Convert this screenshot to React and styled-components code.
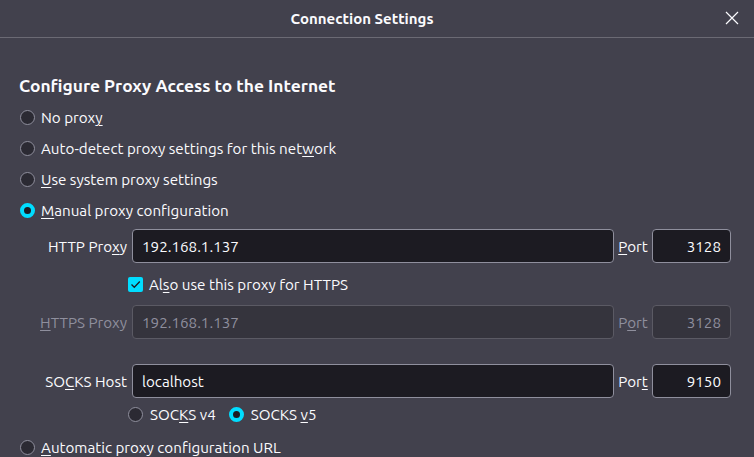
import React from 'react'
import styled, { createGlobalStyle } from 'styled-components'

const GlobalStyle = createGlobalStyle`
  html, body {
    margin: 0;
    padding: 0;
    background: #42414d;
  }
  body {
    font-family: Ubuntu, "Noto Sans", "Liberation Sans", sans-serif;
    color: #fbfbfe;
  }
`

const Dialog = styled.div`
  width: 754px;
  height: 457px;
  overflow: hidden;
  background: #42414d;
`

const Header = styled.div`
  position: relative;
  height: 37px;
  border-bottom: 1px solid #6b6a74;
  display: flex;
  align-items: center;
  justify-content: center;
  padding-right: 30px;
`

const Title = styled.div`
  font-size: 15px;
  font-weight: 700;
`

const CloseBtn = styled.button`
  position: absolute;
  right: 14px;
  top: 10px;
  width: 16px;
  height: 16px;
  padding: 0;
  border: none;
  background: transparent;
  color: #fbfbfe;
  display: flex;
`

const Body = styled.div`
  padding: 38px 19px 0 19px;
`

const Heading = styled.h1`
  margin: 0 0 6px 0;
  font-size: 17.4px;
  line-height: 20px;
  font-weight: 700;
`

const OptionRow = styled.label`
  display: flex;
  align-items: center;
  height: 31px;
  gap: 6px;
  padding-left: 1px;
  font-size: 15.2px;
  margin-top: ${p => p.$mt || 0}px;
`

const Radio = styled.span`
  box-sizing: border-box;
  width: 15px;
  height: 15px;
  border-radius: 50%;
  border: ${p => (p.$checked ? '4px solid #00ddff' : '1px solid #8f8f9d')};
  background: ${p => (p.$checked ? '#1c1b22' : '#2b2a33')};
  flex-shrink: 0;
`

const Key = styled.u`
  text-decoration-thickness: 1px;
  text-underline-offset: 2px;
`

const FieldRow = styled.div`
  display: flex;
  align-items: center;
  height: 34px;
  margin-top: ${p => p.$mt || 0}px;
  font-size: 15.2px;
  color: ${p => (p.$disabled ? '#8f8f9d' : '#fbfbfe')};
`

const FieldLabel = styled.span`
  width: 113px;
  box-sizing: border-box;
  padding-right: 5px;
  text-align: right;
  white-space: nowrap;
`

const Input = styled.div`
  box-sizing: border-box;
  width: ${p => p.$w}px;
  height: 34px;
  border-radius: 4px;
  border: 1px solid ${p => (p.$disabled ? '#5b5a64' : '#8f8f9d')};
  background: ${p => (p.$disabled ? '#35343d' : '#1c1b22')};
  color: ${p => (p.$disabled ? '#8f8f9d' : '#fbfbfe')};
  display: flex;
  align-items: center;
  justify-content: ${p => (p.$right ? 'flex-end' : 'flex-start')};
  padding: 0 9px;
  font-size: 15.2px;
`

const PortLabel = styled.span`
  width: 38px;
  text-align: center;
`

const CheckRow = styled.label`
  display: flex;
  align-items: center;
  gap: 6px;
  height: 42px;
  padding-left: 109px;
  font-size: 15.2px;
`

const Checkbox = styled.span`
  width: 15px;
  height: 15px;
  border-radius: 2px;
  background: #00ddff;
  display: flex;
  align-items: center;
  justify-content: center;
`

const VersionRow = styled.div`
  display: flex;
  align-items: center;
  height: 32px;
  padding-left: 109px;
  gap: 13px;
  font-size: 15.2px;
`

const VersionOption = styled.label`
  display: flex;
  align-items: center;
  gap: 7px;
`

const App = () => {
  return (
    <Dialog>
      <GlobalStyle />
      <Header>
        <Title>Connection Settings</Title>
        <CloseBtn aria-label="Close">
          <svg width="16" height="16" viewBox="0 0 16 16">
            <path d="M2 2 L14 14 M14 2 L2 14" stroke="#fbfbfe" strokeWidth="1.2" fill="none" />
          </svg>
        </CloseBtn>
      </Header>
      <Body>
        <Heading>Configure Proxy Access to the Internet</Heading>
        <OptionRow><Radio /><span>No prox<Key>y</Key></span></OptionRow>
        <OptionRow><Radio /><span>Auto-detect proxy settings for this net<Key>w</Key>ork</span></OptionRow>
        <OptionRow><Radio /><span><Key>U</Key>se system proxy settings</span></OptionRow>
        <OptionRow><Radio $checked /><span><Key>M</Key>anual proxy configuration</span></OptionRow>

        <FieldRow $mt={3}>
          <FieldLabel>HTTP Pro<Key>x</Key>y</FieldLabel>
          <Input $w={482}>192.168.1.137</Input>
          <PortLabel><Key>P</Key>ort</PortLabel>
          <Input $w={79} $right>3128</Input>
        </FieldRow>
        <CheckRow>
          <Checkbox>
            <svg width="13" height="13" viewBox="0 0 13 13">
              <path d="M2.5 6.5 L5.3 9.3 L10.8 3.5" stroke="#1c1b22" strokeWidth="1.3" fill="none" />
            </svg>
          </Checkbox>
          <span>Al<Key>s</Key>o use this proxy for HTTPS</span>
        </CheckRow>
        <FieldRow $disabled>
          <FieldLabel><Key>H</Key>TTPS Proxy</FieldLabel>
          <Input $w={482} $disabled>192.168.1.137</Input>
          <PortLabel>P<Key>o</Key>rt</PortLabel>
          <Input $w={79} $right $disabled>3128</Input>
        </FieldRow>

        <FieldRow $mt={25}>
          <FieldLabel>SO<Key>C</Key>KS Host</FieldLabel>
          <Input $w={482}>localhost</Input>
          <PortLabel>Por<Key>t</Key></PortLabel>
          <Input $w={79} $right>9150</Input>
        </FieldRow>
        <VersionRow>
          <VersionOption><Radio /><span>SOC<Key>K</Key>S v4</span></VersionOption>
          <VersionOption><Radio $checked /><span>SOCKS <Key>v</Key>5</span></VersionOption>
        </VersionRow>
        <OptionRow $mt={2}><Radio /><span><Key>A</Key>utomatic proxy configuration URL</span></OptionRow>
      </Body>
    </Dialog>
  )
}

export default App
